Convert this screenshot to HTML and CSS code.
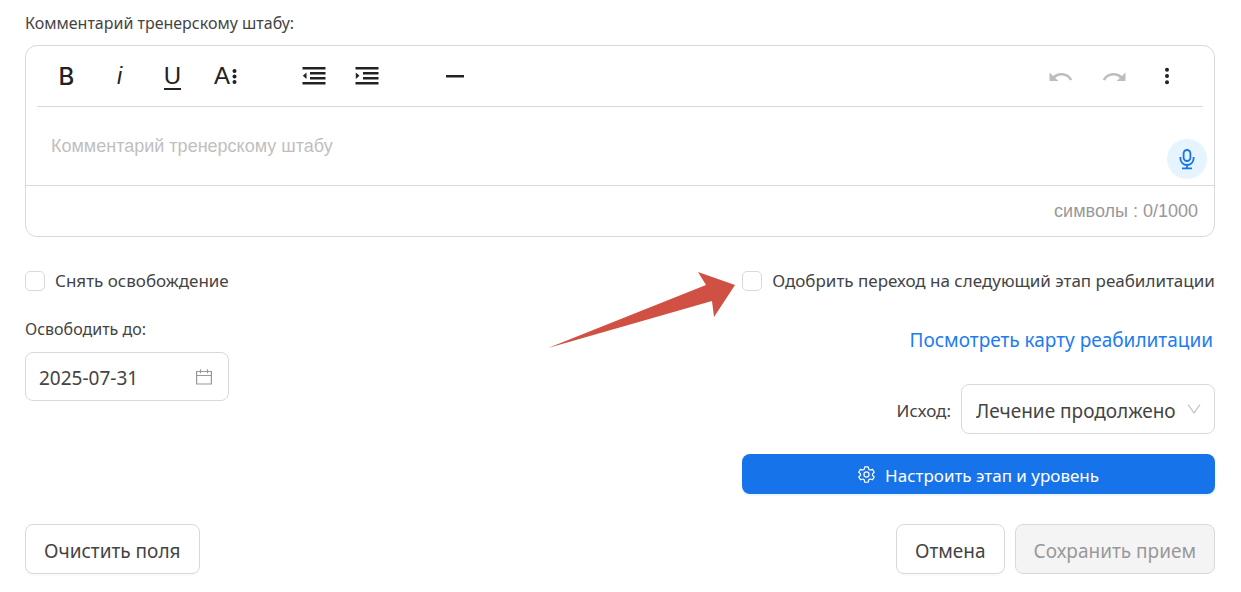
FILE: index.html
```html
<!DOCTYPE html>
<html lang="ru">
<head>
  <meta charset="UTF-8">
  <meta name="viewport" content="width=device-width, initial-scale=1.0">
  <title>Прием</title>
  <link rel="stylesheet" href="styles.css">
</head>
<body>
  <form class="visit-form">
    <!-- Comment editor -->
    <label class="field-label" for="comment">Комментарий тренерскому штабу:</label>
    <div class="editor">
      <div class="toolbar">
        <div class="tool-group">
          <button type="button" class="tool bold" title="Полужирный">B</button>
          <button type="button" class="tool italic" title="Курсив">i</button>
          <button type="button" class="tool underline" title="Подчеркнутый"><span>U</span></button>
          <button type="button" class="tool more-text" title="Еще текст">A<svg width="5" height="16" viewBox="0 0 5 16"><circle cx="2.5" cy="3" r="2"/><circle cx="2.5" cy="8.500" r="2"/><circle cx="2.5" cy="14" r="2"/></svg></button>
        </div>
        <div class="tool-group">
          <button type="button" class="tool" title="Уменьшить отступ">
            <svg width="24" height="20" viewBox="0 0 24 20"><path d="M.5 1h23v2.500h-23zM8 6h15.500v2.500H8zM8 11h15.500v2.500H8zM.5 16h23v2.500h-23zM4.500 6.500v6.500L.8 9.800z"/></svg>
          </button>
          <button type="button" class="tool" title="Увеличить отступ">
            <svg width="24" height="20" viewBox="0 0 24 20"><path d="M.5 1h23v2.500h-23zM8 6h15.500v2.500H8zM8 11h15.500v2.500H8zM.5 16h23v2.500h-23zM.8 6.500v6.500l3.700-3.200z"/></svg>
          </button>
        </div>
        <div class="tool-group">
          <button type="button" class="tool" title="Линия">
            <svg width="20" height="20" viewBox="0 0 20 20"><path d="M1 9h18v2.500H1z"/></svg>
          </button>
        </div>
        <div class="tool-group tool-group-right">
          <button type="button" class="tool" title="Отменить" disabled>
            <svg width="24" height="20" viewBox="0 0 24 20"><path d="M.5 6.500v8.500h9l-3.400-3.100c1.800-1.500 3.700-2.400 6-2.400 4 0 7.400 1.900 8.800 4.900l2.300-.8c-1.800-4-6-6.600-11-6.600-3 0-5.800 1.100-8 2.900z"/></svg>
          </button>
          <button type="button" class="tool" title="Повторить" disabled>
            <svg width="24" height="20" viewBox="0 0 24 20"><path d="M23.500 6.500v8.500h-9l3.400-3.100c-1.800-1.500-3.700-2.400-6-2.400-4 0-7.400 1.900-8.800 4.900l-2.300-.8c1.800-4 6-6.600 11-6.600 3 0 5.800 1.100 8 2.900z"/></svg>
          </button>
          <button type="button" class="tool" title="Еще">
            <svg width="6" height="20" viewBox="0 0 6 20"><circle cx="3" cy="3.700" r="2"/><circle cx="3" cy="10" r="2"/><circle cx="3" cy="16.300" r="2"/></svg>
          </button>
        </div>
      </div>
      <div class="editor-body">
        <textarea id="comment" placeholder="Комментарий тренерскому штабу"></textarea>
        <button type="button" class="mic" title="Диктовка">
          <svg width="22" height="22" viewBox="0 0 22 22" fill="none" stroke="currentColor" stroke-width="1.800"><rect x="7.600" y="2" width="6.800" height="11" rx="3.400"/><path d="M4.400 9v1.400a6.600 6.600 0 0 0 13.200 0V9M11 17v3.400M6 20.400h10"/></svg>
        </button>
      </div>
      <div class="counter">символы : 0/1000</div>
    </div>

    <!-- Options -->
    <div class="options">
      <div class="options-left">
        <label class="check"><input type="checkbox">Снять освобождение</label>
        <label class="field-label" for="releaseDate">Освободить до:</label>
        <div class="date-field">
          <input type="text" id="releaseDate" value="2025-07-31">
          <svg width="16" height="16" viewBox="0 0 16 16" fill="none" stroke="currentColor"><path d="M.6 2.500h14.800v12.500H.6zM.6 6.500h14.800M4.500.3v4M11.500.3v4" stroke-width="1.200"/></svg>
        </div>
      </div>
      <div class="options-right">
        <label class="check"><input type="checkbox">Одобрить переход на следующий этап реабилитации
          <svg class="pointer" width="188" height="78" viewBox="0 0 188 78"><path d="M0 77L158 14 150 1l37 13-21 32-2-16z"/></svg>
        </label>
        <a class="map-link" href="#">Посмотреть карту реабилитации</a>
        <div class="outcome">
          <label for="outcome">Исход:</label>
          <div class="select">
            <select id="outcome"><option>Лечение продолжено</option></select>
            <svg width="14" height="10" viewBox="0 0 14 10" fill="none" stroke="currentColor"><path d="M1 .5l6 8.500 6-8.500" stroke-width="1.200"/></svg>
          </div>
        </div>
        <button type="button" class="primary">
          <svg width="17" height="17" viewBox="0 0 18 18" fill="none" stroke="currentColor" stroke-width="1.300" stroke-linejoin="round"><path d="M7.200.9h3.600l.6 2.500 1.500.9 2.500-.8 1.800 3.100-1.900 1.700v1.500l1.900 1.700-1.800 3.100-2.500-.8-1.500.9-.6 2.500H7.200l-.6-2.500-1.500-.9-2.500.8-1.800-3.100 1.900-1.700V8.300L.8 6.600l1.800-3.100 2.500.8 1.500-.9z"/><circle cx="9" cy="9" r="2.700"/></svg>
          <span>Настроить этап и уровень</span>
        </button>
      </div>
    </div>

    <!-- Actions -->
    <div class="actions">
      <button type="reset" class="btn btn-clear">Очистить поля</button>
      <button type="button" class="btn">Отмена</button>
      <button type="submit" class="btn" disabled>Сохранить прием</button>
    </div>
  </form>
</body>
</html>
```
FILE: styles.css
```css
* {
  box-sizing: border-box;
}

body {
  margin: 0;
  background-color: #ffffff;
  color: #444444;
  font-family: "Noto Sans", "Open Sans", sans-serif;
  font-size: 17px;
  line-height: 24px;
}

button,
input,
select,
textarea {
  font-family: inherit;
  color: inherit;
}

button {
  cursor: pointer;
}

button:disabled {
  cursor: not-allowed;
}

.visit-form {
  padding: 11px 26px 18px 25px;
}

.field-label {
  display: block;
  font-size: 16px;
}

/* Editor */
.editor {
  margin-top: 10px;
  border: 1px solid #d9d9d9;
  border-radius: 12px;
  font-family: "Liberation Sans", Arial, sans-serif;
}

.toolbar {
  display: flex;
  gap: 35px;
  height: 61px;
  margin: 0 11px;
  padding: 0 3px;
  border-bottom: 1px solid #d9d9d9;
}

.tool-group {
  display: flex;
}

.tool-group-right {
  margin-left: auto;
  margin-right: 7px;
}

.tool {
  display: flex;
  align-items: center;
  justify-content: center;
  width: 53px;
  padding: 0;
  border: none;
  background: none;
  color: #222222;
  font-size: 24px;
  line-height: 24px;
}

.tool svg {
  fill: currentColor;
}

.tool:disabled {
  color: #bdbdbd;
}

.bold {
  padding-top: 2px;
  font-family: Inter, sans-serif;
  font-weight: 500;
}

.italic {
  font-size: 23px;
  font-style: italic;
}

.underline {
  padding-top: 2px;
}

.underline span {
  border-bottom: 2px solid;
}

.more-text {
  gap: 2px;
}

.editor-body {
  position: relative;
  border-bottom: 1px solid #d9d9d9;
}

.editor-body textarea {
  display: block;
  width: 100%;
  height: 78px;
  padding: 27px 60px 20px 25px;
  border: none;
  outline: none;
  background: none;
  resize: none;
  font-size: 18px;
  line-height: 24px;
}

.editor-body textarea::placeholder {
  color: #bfbfbf;
}

.mic {
  position: absolute;
  right: 7px;
  bottom: 6px;
  display: flex;
  align-items: center;
  justify-content: center;
  width: 40px;
  height: 40px;
  padding: 0;
  border: none;
  border-radius: 50%;
  background-color: #e6f4ff;
  color: #1773ea;
}

.counter {
  padding: 13px 16px;
  color: #999999;
  font-size: 18px;
  text-align: right;
}

/* Options */
.options {
  display: grid;
  grid-template-columns: 3fr 2fr;
  gap: 8px;
  margin-top: 32px;
}

.check {
  position: relative;
  display: flex;
  align-items: center;
  gap: 10px;
  white-space: nowrap;
}

.check input {
  appearance: none;
  width: 20px;
  height: 20px;
  margin: 0;
  border: 1px solid #d9d9d9;
  border-radius: 5px;
  background-color: #ffffff;
}

.pointer {
  position: absolute;
  top: 2px;
  right: 100%;
  margin-right: 6px;
  fill: #d05044;
}

.options-left .field-label {
  margin-top: 24px;
}

.date-field {
  display: flex;
  align-items: center;
  width: 204px;
  height: 49px;
  margin-top: 11px;
  padding: 0 16px 0 13px;
  border: 1px solid #d9d9d9;
  border-radius: 8px;
  color: #999999;
}

.date-field input {
  flex: 1;
  min-width: 0;
  padding: 2px 0 0;
  border: none;
  outline: none;
  color: #444444;
  font-size: 19px;
}

.options-right {
  display: flex;
  flex-direction: column;
}

.map-link {
  align-self: flex-end;
  margin: 35px 2px 0 0;
  color: #1c7cf2;
  font-size: 19px;
  text-decoration: none;
}

.outcome {
  display: flex;
  align-items: center;
  justify-content: flex-end;
  gap: 10px;
  margin-top: 32px;
}

.outcome label {
  padding-top: 3px;
}

.select {
  position: relative;
  color: #bfbfbf;
}

.select select {
  display: block;
  appearance: none;
  width: 254px;
  height: 50px;
  padding: 3px 24px 0 14px;
  border: 1px solid #d9d9d9;
  border-radius: 8px;
  background-color: #ffffff;
  color: #444444;
  font-size: 19px;
}

.select svg {
  position: absolute;
  top: 20px;
  right: 14px;
  pointer-events: none;
}

.primary {
  display: flex;
  align-items: center;
  justify-content: center;
  gap: 10px;
  height: 40px;
  margin-top: 20px;
  border: none;
  border-radius: 8px;
  background-color: #1773ea;
  box-shadow: 0 2px 0 #eaf7ff;
  color: #ffffff;
  font-size: 17px;
}

.primary span {
  padding-top: 3px;
}

/* Actions */
.actions {
  display: flex;
  gap: 10px;
  margin-top: 30px;
}

.btn {
  height: 50px;
  padding: 3px 18px 0;
  border: 1px solid #d9d9d9;
  border-radius: 8px;
  background-color: #ffffff;
  box-shadow: 0 2px 0 rgba(0, 0, 0, 0.02);
  font-size: 19px;
}

.btn:disabled {
  background-color: #f4f4f4;
  box-shadow: none;
  color: #999999;
}

.btn-clear {
  margin-right: auto;
}
```
